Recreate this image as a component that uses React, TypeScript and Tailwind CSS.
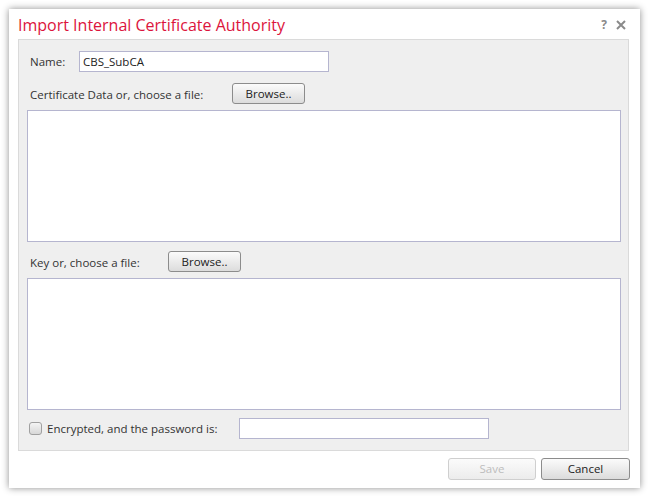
import React from "react";

const font = { fontFamily: '"Open Sans", "DejaVu Sans", sans-serif' };

function Btn({ children, disabled, w }: { children: React.ReactNode; disabled?: boolean; w: string }) {
  return (
    <button
      className={
        disabled
          ? `${w} h-full rounded-[3px] border border-[#cfcfcf] bg-gradient-to-b from-[#fbfbfb] to-[#ececec] text-[#bdbdbd] text-[11.5px] leading-none`
          : `${w} h-full rounded-[3px] border border-[#8c8c8c] bg-gradient-to-b from-[#fbfbfb] to-[#dcdcdc] text-[#222] text-[11.5px] leading-none`
      }
    >
      {children}
    </button>
  );
}

export default function App() {
  return (
    <div className="w-[648px] h-[496px] bg-white pt-[9px] pl-[9px]" style={font}>
      <div className="w-[631px] h-[479px] bg-white shadow-[0_0_7px_rgba(0,0,0,0.45)] flex flex-col">
        <div className="h-[30px] flex items-center pl-[9px] pr-[14px] shrink-0">
          <div className="text-[16px] text-[#dc143c] leading-none mt-[2px]">Import Internal Certificate Authority</div>
          <div className="ml-auto flex items-center gap-[9px] mt-[1px]">
            <span className="text-[12px] font-bold text-[#8a8a8a] leading-none">?</span>
            <svg width="10" height="10" viewBox="0 0 10 10">
              <path d="M1 1 L9 9 M9 1 L1 9" stroke="#8a8a8a" strokeWidth="2" />
            </svg>
          </div>
        </div>
        <div className="ml-[9px] mr-[11px] border border-[#dadada] bg-[#efefef] pt-[11px] pb-[11px] pl-[8px] pr-[7px] flex flex-col text-[11.5px] text-[#333]">
          <div className="h-[21px] flex items-center">
            <span className="pl-[3px] w-[52px] mt-[1px]">Name:</span>
            <input
              defaultValue="CBS_SubCA"
              className="w-[250px] h-[21px] border border-[#b5b5cf] bg-white px-[3px] text-[11.5px] text-[#222] outline-none"
            />
          </div>
          <div className="h-[21px] mt-[11px] flex items-center">
            <span className="pl-[3px] w-[205px] mt-[2px]">Certificate Data or, choose a file:</span>
            <div className="h-[21px]">
              <Btn w="w-[73px]">Browse..</Btn>
            </div>
          </div>
          <textarea className="mt-[6px] h-[132px] w-full border border-[#b5b5cf] bg-white resize-none outline-none" />
          <div className="h-[21px] mt-[9px] flex items-center">
            <span className="pl-[3px] w-[141px] mt-[2px]">Key or, choose a file:</span>
            <div className="h-[21px]">
              <Btn w="w-[73px]">Browse..</Btn>
            </div>
          </div>
          <textarea className="mt-[6px] h-[132px] w-full border border-[#b5b5cf] bg-white resize-none outline-none" />
          <div className="h-[21px] mt-[8px] flex items-center">
            <span className="ml-[2px] w-[13px] h-[13px] rounded-[3px] border border-[#a0a0a0] bg-gradient-to-b from-[#f4f4f4] to-[#d8d8d8]" />
            <span className="ml-[5px] w-[192px] mt-[1px]">Encrypted, and the password is:</span>
            <input className="w-[250px] h-[21px] border border-[#b5b5cf] bg-white outline-none" />
          </div>
        </div>
        <div className="mt-[7px] h-[22px] flex justify-end gap-[5px] pr-[10px]">
          <Btn disabled w="w-[88px]">Save</Btn>
          <Btn w="w-[89px]">Cancel</Btn>
        </div>
      </div>
    </div>
  );
}
